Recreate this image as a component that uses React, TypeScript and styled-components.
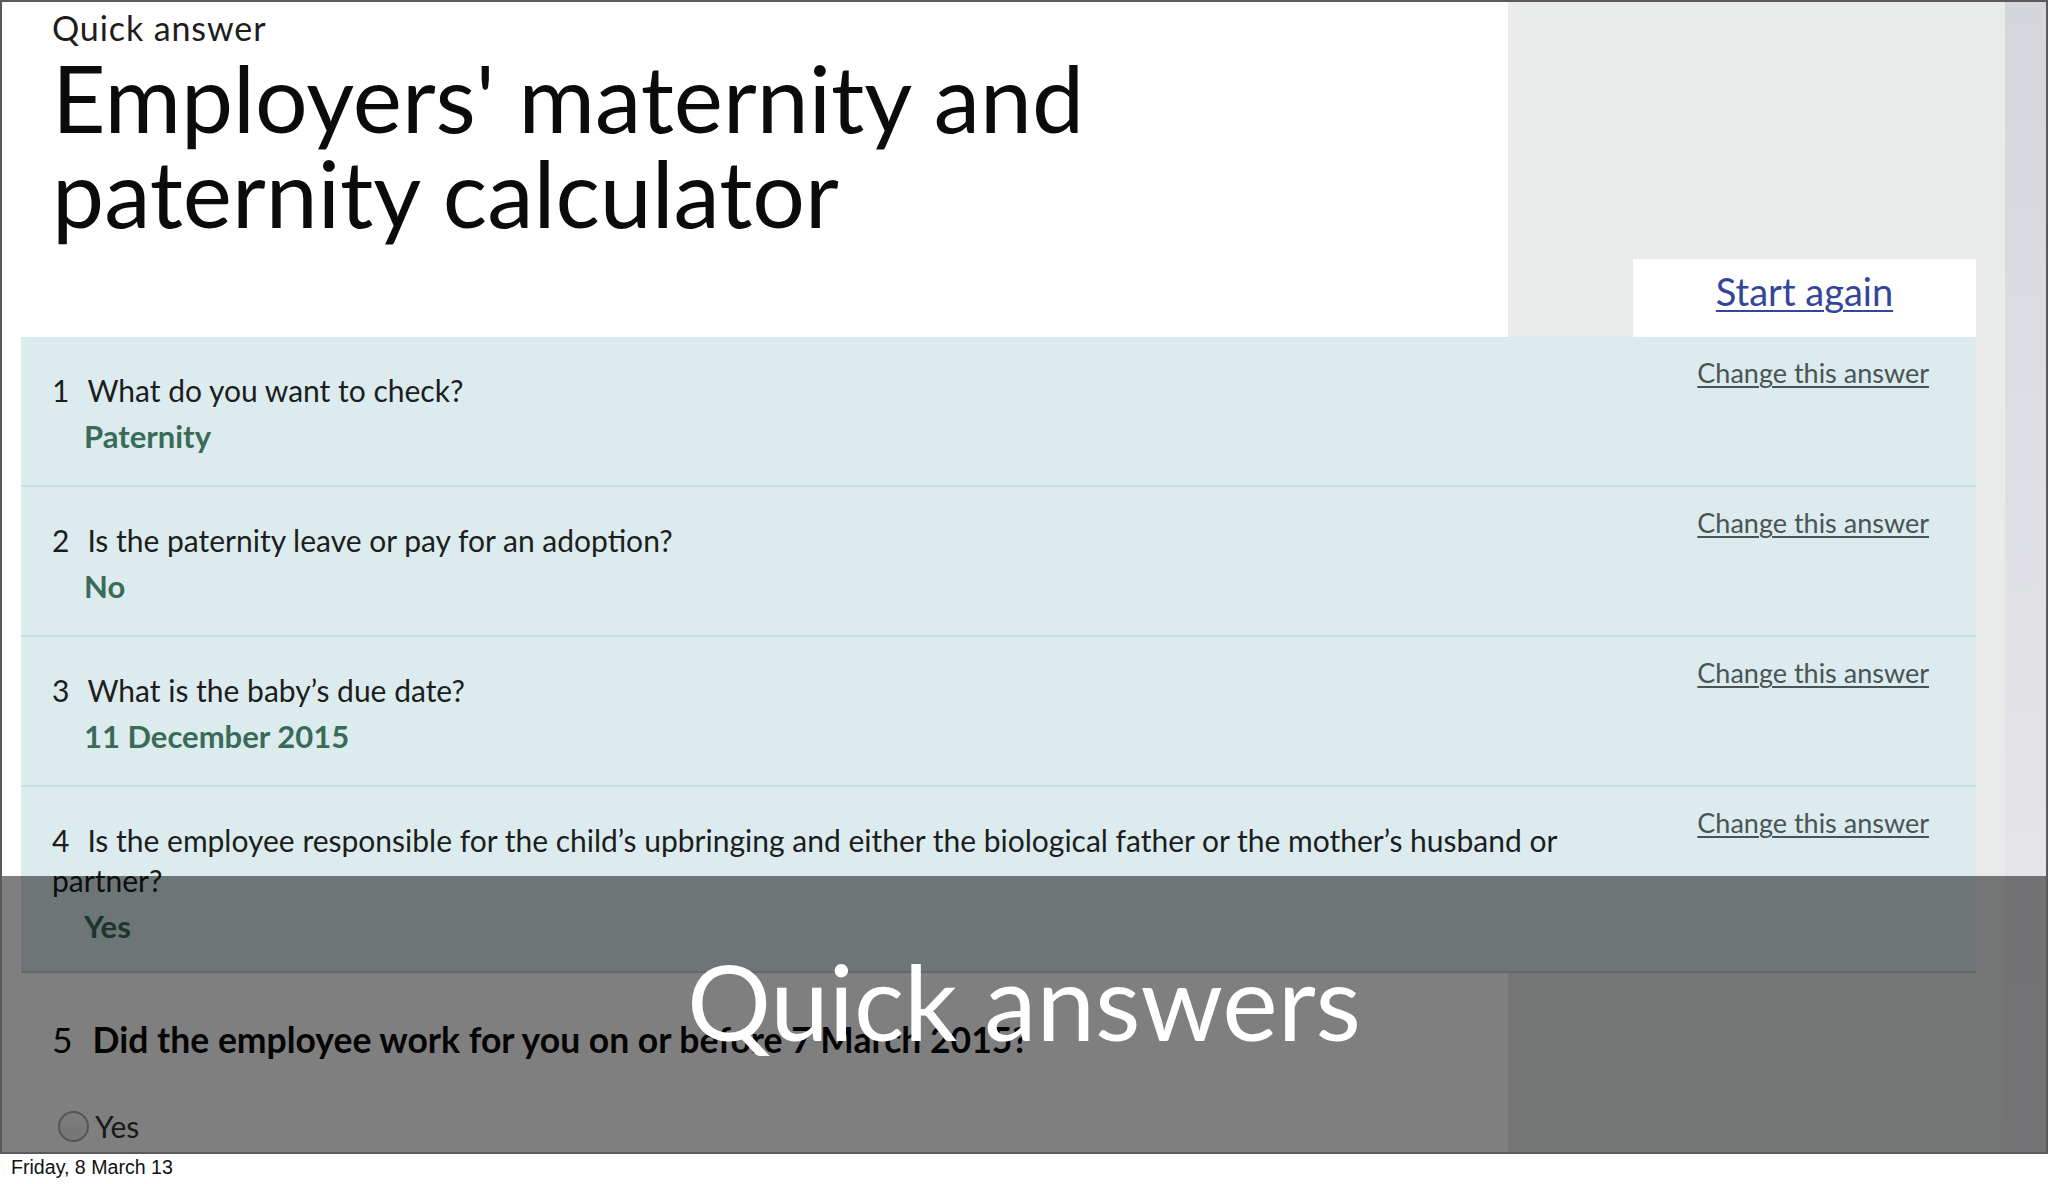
import React from "react";
import styled, { createGlobalStyle } from "styled-components";

const UI = `Lato, "Open Sans", "Noto Sans", sans-serif`;

const Global = createGlobalStyle`
  html, body { margin: 0; padding: 0; background: #ffffff; }
  * { box-sizing: border-box; }
`;

const Slide = styled.div`
  position: relative;
  width: 2048px;
  height: 1154px;
  border: 2px solid #5a5a5a;
  overflow: hidden;
  display: flex;
`;

const Content = styled.div`
  flex: 1;
  display: flex;
  flex-direction: column;
  background: linear-gradient(to right, #ffffff 0 1506px, #e9ebea 1506px 100%);
  font-family: ${UI};
  color: #1d1d1d;
`;

const Scrollbar = styled.div`
  width: 41px;
  flex-shrink: 0;
  background: linear-gradient(to bottom, #d4d6dc 0%, #dfe0e5 45%, #e8e8ec 100%);
`;

const Header = styled.header`
  height: 335px;
  display: flex;
  justify-content: space-between;
  align-items: flex-end;
  flex-shrink: 0;
`;

const TitleBlock = styled.div`
  align-self: flex-start;
  padding: 6px 0 0 50px;
`;

const Label = styled.div`
  font-size: 34px;
  line-height: 40px;
  letter-spacing: 0.9px;
  color: #1d1d1d;
`;

const Title = styled.h1`
  margin: 2px 0 0;
  font-size: 93px;
  line-height: 95px;
  font-weight: 400;
  color: #0b0b0b;
  max-width: 1100px;
`;

const StartBox = styled.div`
  width: 343px;
  height: 78px;
  margin-right: 29px;
  background: #ffffff;
  padding-top: 9px;
  text-align: center;
`;

const StartLink = styled.a`
  font-size: 38px;
  line-height: 46px;
  color: #34469a;
  text-decoration: underline;
  text-underline-offset: 4px;
  text-decoration-thickness: 2px;
`;

const Panel = styled.section`
  margin-left: 19px;
  width: 1955px;
  background: #dcebed;
  flex-shrink: 0;
`;

const Row = styled.div<{ $tall?: boolean }>`
  display: flex;
  height: ${(p) => (p.$tall ? "186px" : "150px")};
  padding: 0 47px 0 31px;
  border-bottom: 2px solid ${(p) => (p.$tall ? "#c6d3d6" : "#c9dcdf")};
`;

const QBlock = styled.div`
  flex: 1;
  padding-top: 33px;
  padding-right: 90px;
`;

const Question = styled.div`
  font-size: 30px;
  line-height: 40px;
  color: #1d1d1d;
`;

const Num = styled.span<{ $gap?: number }>`
  margin-right: ${(p) => p.$gap ?? 18}px;
  font-weight: 400;
`;

const Answer = styled.div`
  margin: 6px 0 0 32px;
  font-size: 31px;
  line-height: 40px;
  font-weight: 700;
  color: #3a6b58;
`;

const ChangeLink = styled.a`
  flex-shrink: 0;
  margin-top: 20px;
  align-self: flex-start;
  font-size: 27px;
  line-height: 32px;
  color: #4a5454;
  text-decoration: underline;
  text-underline-offset: 3px;
  text-decoration-thickness: 2px;
`;

const NextQ = styled.div`
  padding: 45px 0 0 50px;
`;

const NextTitle = styled.div`
  font-size: 35.5px;
  line-height: 44px;
  color: #0b0b0b;
`;

const Bold = styled.strong`
  font-weight: 700;
`;

const RadioRow = styled.label`
  margin: 48px 0 0 6px;
  display: flex;
  align-items: center;
  gap: 6px;
  height: 32px;
  font-size: 30px;
  line-height: 32px;
  color: #333333;
`;

const RadioCircle = styled.span`
  width: 31px;
  height: 31px;
  border-radius: 50%;
  border: 2px solid #aaaaaa;
  background: linear-gradient(to bottom, #fafafa, #ececec);
`;

const Overlay = styled.div`
  position: absolute;
  left: 0;
  right: 0;
  top: 874px;
  bottom: 0;
  background: rgba(0, 0, 0, 0.5);
`;

const Caption = styled.div`
  position: absolute;
  left: 0;
  right: 0;
  top: 72px;
  text-align: center;
  font-family: ${UI};
  font-size: 105px;
  line-height: 105px;
  color: #ffffff;
`;

const Footer = styled.footer`
  height: 30px;
  padding-left: 11px;
  font-family: "Liberation Sans", Arial, sans-serif;
  font-size: 19.6px;
  line-height: 26px;
  color: #111111;
`;

type QA = { n: number; q: string; a: string; tall?: boolean };

const rows: QA[] = [
  { n: 1, q: "What do you want to check?", a: "Paternity" },
  { n: 2, q: "Is the paternity leave or pay for an adoption?", a: "No" },
  { n: 3, q: "What is the baby\u2019s due date?", a: "11 December 2015" },
  {
    n: 4,
    q: "Is the employee responsible for the child\u2019s upbringing and either the biological father or the mother\u2019s husband or partner?",
    a: "Yes",
    tall: true,
  },
];

export default function App() {
  return (
    <>
      <Global />
      <Slide>
        <Content>
          <Header>
            <TitleBlock>
              <Label>Quick answer</Label>
              <Title>Employers' maternity and paternity calculator</Title>
            </TitleBlock>
            <StartBox>
              <StartLink href="#">Start again</StartLink>
            </StartBox>
          </Header>
          <Panel>
            {rows.map((r) => (
              <Row key={r.n} $tall={r.tall}>
                <QBlock>
                  <Question>
                    <Num>{r.n}</Num>
                    {r.q}
                  </Question>
                  <Answer>{r.a}</Answer>
                </QBlock>
                <ChangeLink href="#">Change this answer</ChangeLink>
              </Row>
            ))}
          </Panel>
          <NextQ>
            <NextTitle>
              <Num $gap={20}>5</Num>
              <Bold>Did the employee work for you on or before 7 March 2015?</Bold>
            </NextTitle>
            <RadioRow>
              <RadioCircle />
              Yes
            </RadioRow>
          </NextQ>
        </Content>
        <Scrollbar />
        <Overlay>
          <Caption>Quick answers</Caption>
        </Overlay>
      </Slide>
      <Footer>Friday, 8 March 13</Footer>
    </>
  );
}
